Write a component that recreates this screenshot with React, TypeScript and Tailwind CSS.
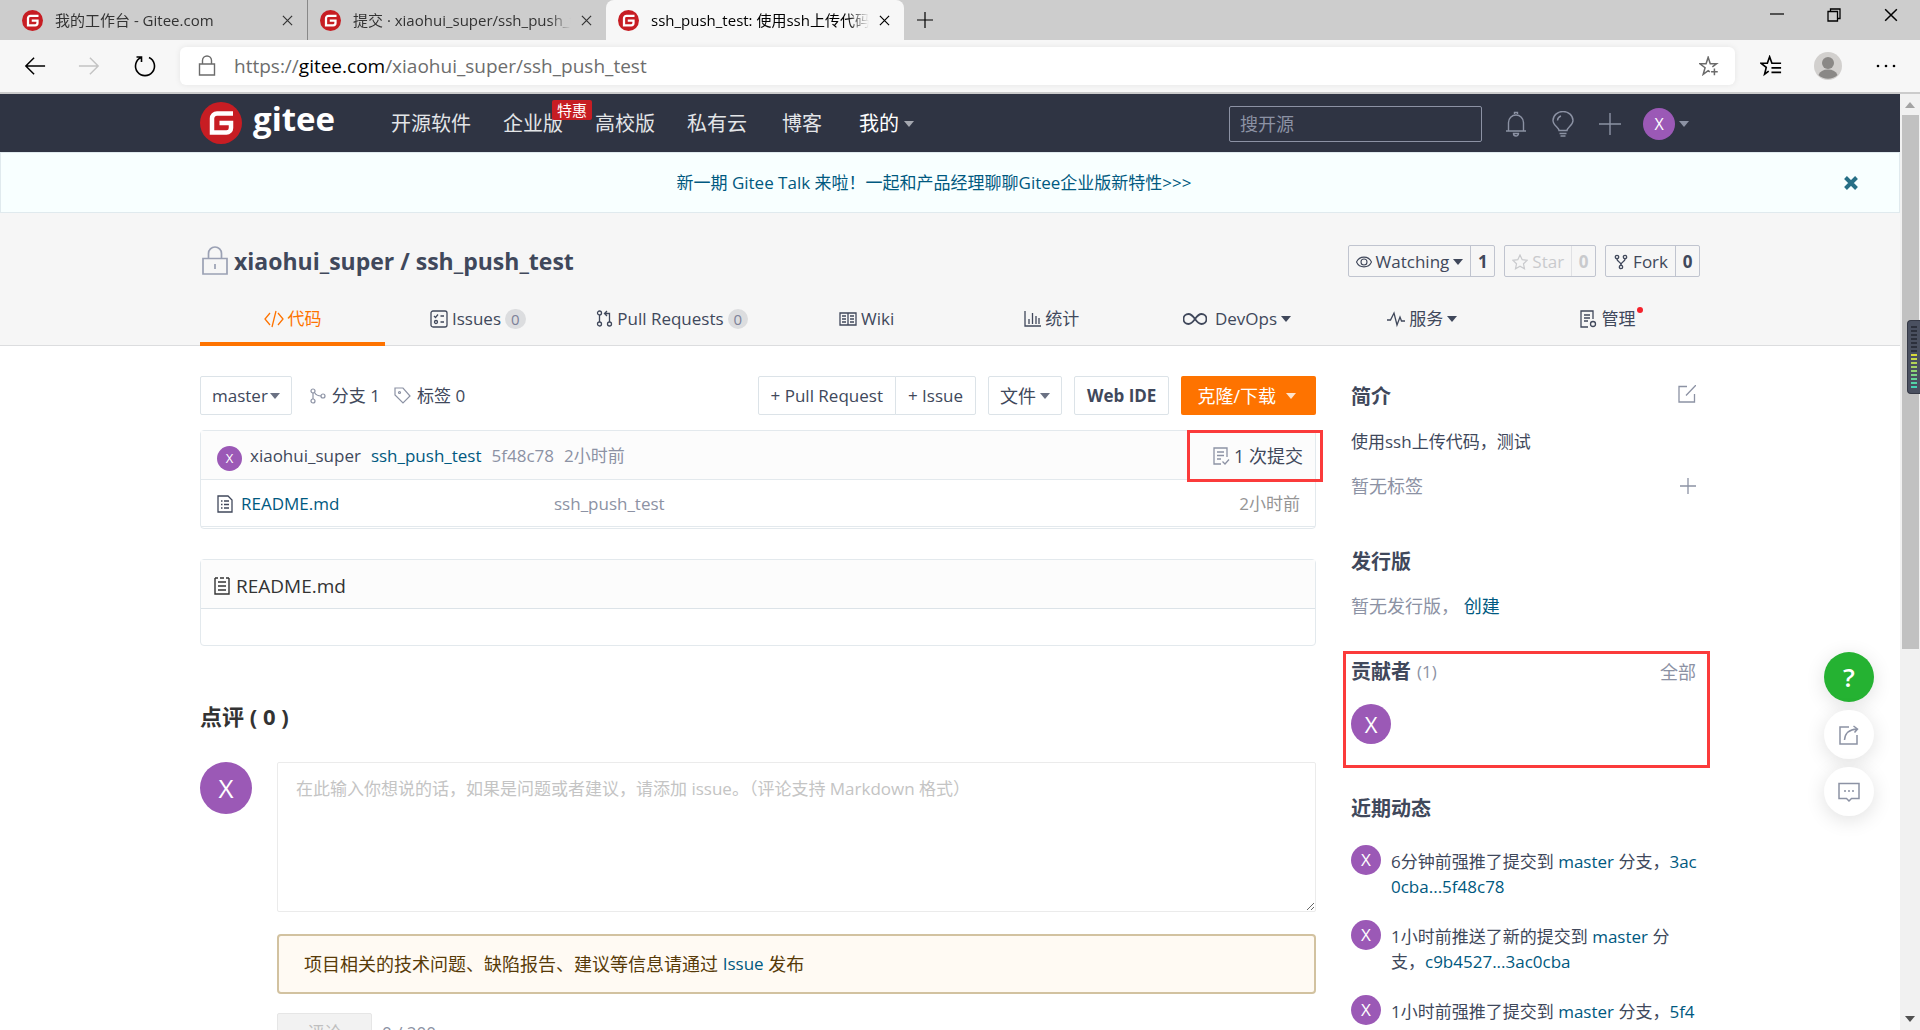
import type { ReactNode } from "react";

const browserTabs = [
  { title: "我的工作台 - Gitee.com", active: false },
  { title: "提交 · xiaohui_super/ssh_push_test", active: false },
  { title: "ssh_push_test: 使用ssh上传代码，测试", active: true },
];

const activities = [
  { text: "6分钟前强推了提交到", hash: "3ac0cba...5f48c78" },
  { text: "1小时前推送了新的提交到", hash: "c9b4527...3ac0cba" },
  { text: "1小时前强推了提交到", hash: "5f48c78...c9b4527" },
];

// Green to yellow meter drawn on the side widget
const meterBars = [
  "bg-[#2c303c]", "bg-[#2c303c]", "bg-[#2c303c]", "bg-[#2c303c]", "bg-[#2c303c]", "bg-[#2c303c]", "bg-[#2c303c]",
  "bg-[#d8d83a]", "bg-[#c8d84a]", "bg-[#b4d456]", "bg-[#a4d466]", "bg-[#90d474]", "bg-[#7cd486]",
  "bg-[#66d498]", "bg-[#54d4a6]", "bg-[#46d4b4]",
];

function Icon({ className = "", box = 24, width = 1.5, children }: { className?: string; box?: number; width?: number; children: ReactNode }) {
  return (
    <svg className={`shrink-0 ${className}`} viewBox={`0 0 ${box} ${box}`} fill="none" stroke="currentColor" strokeWidth={width} aria-hidden="true">
      {children}
    </svg>
  );
}

function GiteeMark({ className }: { className: string }) {
  return (
    <svg className={`shrink-0 ${className}`} viewBox="0 0 42 42" aria-hidden="true">
      <circle cx="21" cy="21" r="21" fill="#c71d23" />
      <path d="M33 11.5H17a5 5 0 0 0-5 5V30.500h14.500a4.500 4.500 0 0 0 4.500-4.500v-5H19.500" fill="none" stroke="#fff" strokeWidth="4.500" />
    </svg>
  );
}

function Caret({ className = "" }: { className?: string }) {
  return (
    <svg className={`h-[6px] w-[10px] shrink-0 ${className}`} viewBox="0 0 10 6" fill="currentColor" aria-hidden="true">
      <path d="M0 0h10L5 6z" />
    </svg>
  );
}

function Cross({ className }: { className: string }) {
  return (
    <Icon className={className} box={12} width={1.3}>
      <path d="M1 1l10 10M11 1L1 11" />
    </Icon>
  );
}

function Avatar({ className }: { className: string }) {
  return (
    <span className={`flex shrink-0 items-center justify-center rounded-full bg-[#9b59b6] text-white ${className}`}>X</span>
  );
}

function BrowserChrome() {
  return (
    <header className="shrink-0 bg-[#f7f7f7]">
      <div className="flex h-10 items-stretch bg-[#cdcdcd] pl-[10px] text-[15px]">
        {browserTabs.map((tab, i) => (
          <div
            key={tab.title}
            className={`flex w-[298px] items-center pl-3 pr-[10px] ${tab.active ? "rounded-t-lg bg-[#f7f7f7] text-black" : "text-[#333]"} ${i === 0 ? "border-r border-[#888]" : ""}`}
          >
            <GiteeMark className="h-[21px] w-[21px]" />
            <span className="ml-3 mr-[6px] flex-1 overflow-hidden whitespace-nowrap [mask-image:linear-gradient(to_right,black_90%,transparent)]">{tab.title}</span>
            <button type="button" aria-label="关闭标签页" className="p-1">
              <Cross className="h-[11px] w-[11px]" />
            </button>
          </div>
        ))}
        <button type="button" aria-label="新建标签页" className="px-[13px]">
          <Icon className="h-4 w-4" box={16} width={1.2}>
            <path d="M8 0v16M0 8h16" />
          </Icon>
        </button>
        <div className="ml-auto flex items-start gap-[43px] pr-[22px] pt-2 text-black">
          <button type="button" aria-label="最小化">
            <Icon className="h-[14px] w-[14px]" box={14} width={1.2}><path d="M0 6h14" /></Icon>
          </button>
          <button type="button" aria-label="还原">
            <Icon className="h-[14px] w-[14px]" box={14} width={1.3}><path d="M1 3.500h9.500V13H1zM3.500 3.500V1H13v9.500h-2.500" /></Icon>
          </button>
          <button type="button" aria-label="关闭">
            <Cross className="h-[14px] w-[14px]" />
          </button>
        </div>
      </div>
      <div className="flex h-[52px] items-center pl-6 pr-6">
        <button type="button" aria-label="后退" className="text-black">
          <Icon className="h-[22px] w-[22px]" width={1.600}><path d="M23 12H2M11 3l-9 9 9 9" /></Icon>
        </button>
        <button type="button" aria-label="前进" className="ml-8 text-[#c4c4c4]">
          <Icon className="h-[22px] w-[22px]" width={1.600}><path d="M1 12h21M13 3l9 9-9 9" /></Icon>
        </button>
        <button type="button" aria-label="刷新" className="ml-[33px] text-black">
          <Icon className="h-6 w-6" width={1.600}><path d="M8 3.500a9.500 9.500 0 1 0 8 0M3.500 3H8.500v5" /></Icon>
        </button>
        <div className="ml-[23px] flex h-[38px] flex-1 items-center rounded-md bg-white px-4 shadow-[0_0_6px_rgba(0,0,0,0.08)]">
          <Icon className="h-[22px] w-[22px] text-[#6b6b6b]" box={22} width={1.400}>
            <path d="M3.500 9h15v11h-15zM6.500 9V5.500a4.500 4.500 0 0 1 9 0V9" />
          </Icon>
          <span className="ml-4 flex-1 text-[19px] text-[#6d6d6d]">
            https://<span className="text-black">gitee.com</span>/xiaohui_super/ssh_push_test
          </span>
          <button type="button" aria-label="添加到收藏夹" className="text-[#6b6b6b]">
            <Icon className="h-5 w-5" width={1.800}>
              <path d="M13 19l-2-1.500L5 22l2.300-8L1 9.300h7.500L11 1.500l2.500 7.800H21L16 13M18.500 15v8M14.500 19h8" />
            </Icon>
          </button>
        </div>
        <button type="button" aria-label="收藏夹" className="ml-[25px] text-black">
          <Icon className="h-[22px] w-[22px]" width={1.800}>
            <path d="M9.500 17.500L5 21l1.800-7.500L1 9h7l2.500-7L13 9h10M12.500 14H23M12.500 19H23" />
          </Icon>
        </button>
        <svg className="ml-8 h-7 w-7" viewBox="0 0 28 28" aria-hidden="true">
          <circle cx="14" cy="14" r="14" fill="#d2d0ce" />
          <circle cx="14" cy="11" r="6" fill="#8a8886" />
          <path d="M4.500 23a10 8 0 0 1 19 0 14 14 0 0 1-19 0" fill="#8a8886" />
        </svg>
        <button type="button" aria-label="设置及其他" className="ml-[34px] text-black">
          <svg className="h-5 w-5" viewBox="0 0 20 20" fill="currentColor" aria-hidden="true">
            <circle cx="2" cy="10" r="1.300" /><circle cx="10" cy="10" r="1.300" /><circle cx="18" cy="10" r="1.300" />
          </svg>
        </button>
      </div>
      <div className="h-[2px] bg-[#cbcbcb]" />
    </header>
  );
}

function SiteNav() {
  return (
    <nav className="bg-[#2f3443] text-[#e3e5e8]">
      <div className="mx-auto flex h-[58px] max-w-[1500px] items-center pt-[2px] text-[20px]">
        <a href="#home" className="-mt-[2px] flex items-center gap-[11px] text-white">
          <GiteeMark className="h-[42px] w-[42px]" />
          <span className="-mt-2 text-[33px] font-bold leading-10">gitee</span>
        </a>
        <a href="#explore" className="ml-14">开源软件</a>
        <a href="#enterprise" className="relative ml-8">
          企业版
          <span className="absolute -top-3 left-[49px] whitespace-nowrap rounded-xs bg-[#c71d23] px-[5px] text-[15px] leading-5 text-white">特惠</span>
        </a>
        <a href="#education" className="ml-8">高校版</a>
        <a href="#private" className="ml-8">私有云</a>
        <a href="#blog" className="ml-[35px]">博客</a>
        <a href="#mine" className="ml-[37px] flex items-center gap-[5px] text-white">
          我的 <Caret className="text-[#a5a8b0]" />
        </a>
        <input
          type="text"
          aria-label="搜开源"
          placeholder="搜开源"
          className="ml-auto h-9 w-[253px] rounded-xs border border-[#8c92a4] bg-transparent px-[10px] text-[18px] text-white placeholder:text-[#8c92a4]"
        />
        <button type="button" aria-label="通知" className="ml-[21px] text-[#8c92a4]">
          <Icon className="h-[26px] w-[26px]" box={26} width={1.400}>
            <path d="M3 20h20M5.500 20v-8.500a7.500 7.500 0 0 1 15 0V20M11.500 3V1.500h3V3M10.500 22.500a2.500 2.500 0 0 0 5 0z" />
          </Icon>
        </button>
        <button type="button" aria-label="提示" className="ml-[21px] text-[#8c92a4]">
          <Icon className="h-[26px] w-[26px]" box={26} width={1.400}>
            <path d="M9 19.500c0-3-6-5-6-10a10 9 0 0 1 20 0c0 5-6 7-6 10zM9.500 22.500h7M10.500 25h5M7.500 9.500a5 5 0 0 1 3.500-4.500" />
          </Icon>
        </button>
        <button type="button" aria-label="新建" className="ml-[23px] text-[#8c92a4]">
          <Icon className="h-[22px] w-[22px]" box={22} width={1.400}><path d="M11 0v22M0 11h22" /></Icon>
        </button>
        <button type="button" aria-label="用户菜单" className="ml-[22px] mr-[11px] flex items-center gap-1 text-[#8c92a4]">
          <Avatar className="h-8 w-8 text-[16px]" />
          <Caret />
        </button>
      </div>
    </nav>
  );
}

function Announcement() {
  return (
    <div className="flex h-[61px] items-center border border-[#e0eaee] bg-[#f8ffff] pl-7 pr-9 text-[#005980]">
      <a href="#talk" className="flex-1 text-center">新一期 Gitee Talk 来啦！一起和产品经理聊聊Gitee企业版新特性&gt;&gt;&gt;</a>
      <button type="button" aria-label="关闭公告" className="flex w-6 justify-center">
        <Icon className="h-[14px] w-[14px] text-[#276f86]" box={14} width={4}><path d="M1.500 1.500l11 11M12.500 1.500l-11 11" /></Icon>
      </button>
    </div>
  );
}

function CountButton({ icon, label, count, caret, muted }: { icon: ReactNode; label: string; count: number; caret?: boolean; muted?: boolean }) {
  return (
    <div className={`flex h-8 items-stretch rounded-xs border border-[#c0c4cf] ${muted ? "text-[#c9cacd]" : "text-[#40485b]"}`}>
      <button type="button" disabled={muted} className="flex items-center gap-1 px-[7px] pt-[2px]">
        {icon}
        <span>{label}</span>
        {caret && <Caret />}
      </button>
      <a href="#count" className={`flex w-6 items-center justify-center border-l pt-[2px] font-bold ${muted ? "border-[#e0e1e4]" : "border-[#c0c4cf]"}`}>{count}</a>
    </div>
  );
}

function RepoTab({ icon, label, count, caret, wide, active, dot }: { icon: ReactNode; label: string; count?: number; caret?: boolean; wide?: boolean; active?: boolean; dot?: boolean }) {
  return (
    <a
      href="#tab"
      className={`-mb-px flex items-center justify-center gap-1 border-b-4 pt-[6px] ${wide ? "flex-[11]" : "flex-[10]"} ${active ? "border-[#fe7300] text-[#fe7300]" : "border-transparent"}`}
    >
      {icon}
      <span className="relative">
        {label}
        {dot && <span className="absolute -right-2 top-0 h-[6px] w-[6px] rounded-full bg-[#f5222d]" />}
      </span>
      {count !== undefined && <span className="rounded-full bg-[#dcdddf] px-[6px] text-[15px] leading-5 text-[#7c8299]">{count}</span>}
      {caret && <Caret />}
    </a>
  );
}

function RepoHeader() {
  return (
    <section className="border-b border-[#dcdddf] bg-[#f6f6f6] pt-8 text-[#40485b]">
      <div className="mx-auto max-w-[1500px]">
        <div className="flex items-center">
          <Icon className="h-[30px] w-[30px] text-[#9ba1b4]" box={30} width={1.700}>
            <path d="M3 12.500h24V28H3zM8.500 12.500V7.500a6.500 6.500 0 0 1 13 0v5M15 18v5" />
          </Icon>
          <h1 className="ml-1 text-[23px] font-bold leading-8">
            <a href="#owner">xiaohui_super</a> / <a href="#repo">ssh_push_test</a>
          </h1>
          <div className="ml-auto flex gap-[9px]">
            <CountButton
              label="Watching"
              count={1}
              caret
              icon={<Icon className="h-4 w-4" box={16} width={1.100}><path d="M.5 8c3-6.500 12-6.500 15 0-3 6.500-12 6.500-15 0z" /><circle cx="8" cy="8" r="3" /></Icon>}
            />
            <CountButton
              label="Star"
              count={0}
              muted
              icon={<Icon className="h-4 w-4" box={16} width={1.200}><path d="M8 1l2.200 4.700 5 .6-3.700 3.500 1 5L8 12.300l-4.500 2.500 1-5L.8 6.300l5-.6z" /></Icon>}
            />
            <CountButton
              label="Fork"
              count={0}
              icon={<Icon className="h-4 w-4" box={16} width={1.300}><circle cx="4" cy="3" r="1.700" /><circle cx="12" cy="3" r="1.700" /><circle cx="8" cy="13" r="1.700" /><path d="M4 5c0 3 4 2.500 4 6 0-3.500 4-3 4-6" /></Icon>}
            />
          </div>
        </div>
        <div className="mt-3 flex h-14 items-stretch">
          <RepoTab active label="代码" icon={<Icon className="h-5 w-5" box={20} width={1.300}><path d="M6 4L1 10l5 6M14 4l5 6-5 6M12 2L8 18" /></Icon>} />
          <RepoTab label="Issues" count={0} icon={<Icon className="h-[18px] w-[18px]" box={18} width={1.300}><rect x="1" y="1" width="16" height="16" rx="2" /><path d="M4 6l1.500 1.500L8 4.500M10.500 6H14M10.500 12H14" /><circle cx="6" cy="12" r="1.500" /></Icon>} />
          <RepoTab wide label="Pull Requests" count={0} icon={<Icon className="h-[17px] w-[17px]" box={17} width={1.300}><circle cx="3.500" cy="3" r="2" /><circle cx="3.500" cy="14" r="2" /><circle cx="13.500" cy="14" r="2" /><path d="M3.500 5v7M13.500 12V3.500H8.500M11 1L8.500 3.500 11 6" /></Icon>} />
          <RepoTab label="Wiki" icon={<Icon className="h-[18px] w-[18px]" box={18} width={1.300}><path d="M1 3h16v12H1zM9 3v12M3 6h4M3 9h4M3 12h4M11 6h4M11 9h4M11 12h4" /></Icon>} />
          <RepoTab label="统计" icon={<Icon className="h-[17px] w-[17px]" box={17} width={1.300}><path d="M1 1v15h16M5 14V9M8.500 14V3M12 14V6M15 14V8" /></Icon>} />
          <RepoTab label="DevOps" caret icon={<Icon className="mr-1 h-6 w-6" width={1.800}><path d="M12 12c-2.500-3.500-4-5-6.500-5a5 5 0 0 0 0 10c2.500 0 4-1.500 6.500-5s4-5 6.500-5a5 5 0 0 1 0 10c-2.500 0-4-1.500-6.500-5z" /></Icon>} />
          <RepoTab label="服务" caret icon={<Icon className="h-[18px] w-[18px]" box={18} width={1.300}><path d="M0 10h3.500L7 3l3 12 3-8 1.500 4H18" /></Icon>} />
          <RepoTab label="管理" dot icon={<Icon className="h-[18px] w-[18px]" box={18} width={1.300}><path d="M9 17H2V1h12v8M5 5h6M5 8h6M5 11h4" /><circle cx="14" cy="14" r="2.500" /></Icon>} />
        </div>
      </div>
    </section>
  );
}

function Toolbar() {
  const button = "flex h-[39px] items-center border border-[#dce3e8] bg-white";
  return (
    <div className="flex items-center text-[#40485b]">
      <button type="button" className={`${button} gap-[2px] rounded-xs px-[11px]`}>
        master <Caret className="text-[#6a7183]" />
      </button>
      <a href="#branches" className="ml-[18px] flex items-center gap-[6px]">
        <Icon className="h-4 w-4 text-[#8c92a4]" box={16} width={1.200}><circle cx="3" cy="3" r="2" /><circle cx="3" cy="13" r="2" /><circle cx="13" cy="8" r="2" /><path d="M3 5v6M4.500 4.500C6 7 8 8 11 8" /></Icon>
        分支 1
      </a>
      <a href="#tags" className="ml-[14px] flex items-center gap-[6px]">
        <Icon className="h-[17px] w-[17px] text-[#8c92a4]" box={17} width={1.200}><path d="M1 1h8l7 8-7 7-8-8z" /><circle cx="5.500" cy="5.500" r="1" /></Icon>
        标签 0
      </a>
      <div className="ml-auto flex">
        <button type="button" className={`${button} rounded-l-xs px-3`}>+ Pull Request</button>
        <button type="button" className={`${button} -ml-px rounded-r-xs px-3`}>+ Issue</button>
      </div>
      <button type="button" className={`${button} ml-3 gap-1 rounded-xs px-[11px] text-[18px]`}>
        文件 <Caret className="text-[#6a7183]" />
      </button>
      <button type="button" className={`${button} ml-3 rounded-xs px-3 font-bold`}>Web IDE</button>
      <button type="button" className="ml-3 flex h-[39px] items-center gap-[10px] rounded-xs bg-[#fe7300] pl-4 pr-5 text-[18px] text-white">
        克隆/下载 <Caret className="text-[#ffe3cc]" />
      </button>
    </div>
  );
}

function FileTable() {
  return (
    <div className="mt-[15px] rounded-sm border border-[#e3e9ed] pb-px">
      <div className="flex h-12 items-center bg-[#fcfcfc] pl-4 pr-3 pt-[2px]">
        <Avatar className="mt-1 h-[25px] w-[25px] text-[13px]" />
        <a href="#owner" className="ml-2 text-[#40485b]">xiaohui_super</a>
        <a href="#commit" className="ml-[10px] text-[#005980]">ssh_push_test</a>
        <a href="#commit" className="ml-[10px] text-[#8c92a4]">5f48c78</a>
        <span className="ml-[10px] text-[#8c92a4]">2小时前</span>
        <a href="#commits" className="relative ml-auto flex items-center gap-1 text-[18px] text-[#40485b]">
          <Icon className="h-[18px] w-[18px] text-[#8c92a4]" box={18} width={1.300}><path d="M15 10V1H2v16h7M5 5h7M5 8.500h7M5 12h4M10.500 14.500l2.500 2.500 4-4.500" /></Icon>
          1 次提交
          <span className="pointer-events-none absolute -inset-y-[14px] -left-[25px] -right-5 border-[3px] border-[#fb3b3b]" />
        </a>
      </div>
      <table className="w-full table-fixed">
        <tbody>
          <tr className="h-[47px] border-y border-[#e3e9ed]">
            <td className="w-[353px] pl-[15px] pt-[2px]">
              <a href="#readme" className="flex items-center gap-[7px] text-[#005980]">
                <Icon className="h-[18px] w-[18px] text-[#40485b]" box={18} width={1.300}><path d="M2 1h10l4 4v12H2zM5 6h1.500M5 9.500h1.500M5 13h1.500M8 6h5M8 9.500h5M8 13h5" /></Icon>
                README.md
              </a>
            </td>
            <td className="pt-[2px] text-[#8c92a4]">
              <a href="#commit">ssh_push_test</a>
            </td>
            <td className="w-40 pr-[15px] pt-[2px] text-right text-[#959595]">2小时前</td>
          </tr>
        </tbody>
      </table>
    </div>
  );
}

function Comments() {
  return (
    <section>
      <h2 className="mt-[54px] text-[22px] font-bold leading-8 text-[#333]">点评 ( 0 )</h2>
      <form className="mt-[30px] flex gap-[25px]">
        <Avatar className="h-[52px] w-[52px] text-[26px]" />
        <div className="flex-1">
          <textarea
            aria-label="评论内容"
            placeholder="在此输入你想说的话，如果是问题或者建议，请添加 issue。（评论支持 Markdown 格式）"
            className="block h-[150px] w-full rounded-xs border border-[#ebebeb] px-[18px] py-3 text-[17px] leading-7 placeholder:text-[#c4c4c4]"
          />
          <p className="mt-[22px] flex h-[60px] items-center whitespace-pre rounded-sm border-2 border-[#d2c2a0] bg-[#fffaf3] px-[25px] text-[18px] text-[#573a08]">
            项目相关的技术问题、缺陷报告、建议等信息请通过 <a href="#issue" className="text-[17px] text-[#005980]">Issue</a> 发布
          </p>
          <div className="mt-[19px] flex items-center gap-[10px]">
            <button type="button" disabled className="h-[39px] w-[95px] rounded-xs border border-[#e6e6e6] bg-[#f2f2f2] text-[#bfbfbf]">评论</button>
            <span className="text-[#8c92a4]">0 / 200</span>
          </div>
        </div>
      </form>
    </section>
  );
}

function Sidebar() {
  return (
    <aside className="w-[349px] shrink-0 pt-[9px] text-[18px] leading-[26px] text-[#40485b]">
      <div className="flex items-start justify-between pr-1">
        <h2 className="text-[20px] font-bold leading-6">简介</h2>
        <button type="button" aria-label="编辑简介" className="text-[#8c92a4]">
          <Icon className="h-[18px] w-[18px]" box={18} width={1.300}><path d="M9 1.500H1V17h15.500V9M18 0L8 10.500" /></Icon>
        </button>
      </div>
      <p className="mt-5 text-[17px]">使用ssh上传代码，测试</p>
      <div className="mt-[18px] flex items-center justify-between pr-1 text-[#8c92a4]">
        <span>暂无标签</span>
        <button type="button" aria-label="添加标签">
          <Icon className="h-4 w-4" box={16} width={1.300}><path d="M8 0v16M0 8h16" /></Icon>
        </button>
      </div>
      <h2 className="mt-[51px] text-[20px] font-bold leading-6">发行版</h2>
      <p className="mt-[19px] text-[#8c92a4]">
        暂无发行版， <a href="#release" className="text-[#005980]">创建</a>
      </p>
      <div className="relative mt-10">
        <div className="flex items-center pr-1">
          <h2 className="text-[20px] font-bold leading-6">贡献者</h2>
          <span className="ml-[6px] text-[17px] text-[#8c92a4]">(1)</span>
          <a href="#contributors" className="ml-auto text-[#8c92a4]">全部</a>
        </div>
        <Avatar className="mt-[19px] h-10 w-10 text-[22px]" />
        <span className="pointer-events-none absolute -bottom-6 -left-2 -right-[10px] -top-2 border-[3px] border-[#fb3b3b]" />
      </div>
      <h2 className="mt-[53px] text-[20px] font-bold leading-6">近期动态</h2>
      <ul className="mt-6">
        {activities.map((item) => (
          <li key={item.hash} className="flex h-[75px] gap-[10px]">
            <Avatar className="h-[30px] w-[30px] text-[17px]" />
            <p className="flex-1 break-all pt-1 text-[17px] leading-[25px]">
              {item.text} <a href="#branch" className="text-[#005980]">master</a> 分支，
              <a href="#diff" className="text-[#005980]">{item.hash}</a>
            </p>
          </li>
        ))}
      </ul>
    </aside>
  );
}

function FloatingButtons() {
  const circle = "flex items-center justify-center rounded-full shadow-[0_4px_20px_rgba(0,0,0,0.12)]";
  return (
    <div className="absolute right-[26px] top-[558px] flex flex-col gap-2">
      <button type="button" aria-label="帮助" className={`${circle} h-[50px] w-[50px] bg-[#25b232] text-[26px] font-semibold text-white`}>?</button>
      <button type="button" aria-label="分享" className={`${circle} h-[49px] w-[50px] bg-white text-[#8c92a4]`}>
        <Icon className="h-5 w-5" box={20} width={1.500}><path d="M10 2H1v17h17v-9M5.500 15C6 8 9.500 4.500 18 4M14.500 1L18.500 4l-3 3.500" /></Icon>
      </button>
      <button type="button" aria-label="反馈" className={`${circle} h-[49px] w-[50px] bg-white text-[#8c92a4]`}>
        <Icon className="h-[22px] w-[22px]" box={22} width={1.500}><path d="M1 2.500h20v15h-7.500L11 20l-2.500-2.500H1zM6 10h2M10 10h2M14 10h2" /></Icon>
      </button>
    </div>
  );
}

function ScrollTrack() {
  return (
    <div className="relative flex w-5 shrink-0 flex-col items-center bg-[#f1f1f1] py-2 text-[#505050]">
      <Caret className="rotate-180 text-[#a3a3a3]" />
      <div className="mt-[7px] h-[58%] w-[17px] bg-[#c1c1c1]" />
      <Caret className="mt-auto" />
      <div className="absolute right-0 top-[226px] flex h-[74px] w-[13px] flex-col items-center justify-center gap-[2px] rounded-l-sm border border-r-0 border-[#343845] bg-[#4a5060]">
        {meterBars.map((bar, i) => (
          <span key={i} className={`h-[2px] w-[6px] ${bar}`} />
        ))}
      </div>
    </div>
  );
}

export default function App() {
  return (
    <div className="flex h-screen flex-col overflow-hidden bg-white font-['Open_Sans','Noto_Sans_CJK_SC',sans-serif] text-[17px] leading-6">
      <BrowserChrome />
      <div className="relative flex min-h-0 flex-1">
        <div className="relative min-w-0 flex-1 overflow-hidden">
          <SiteNav />
          <Announcement />
          <RepoHeader />
          <main className="mx-auto flex max-w-[1500px] gap-[35px] pt-[30px]">
            <div className="min-w-0 flex-1">
              <Toolbar />
              <FileTable />
              <article className="mt-[30px] rounded-sm border border-[#e3e9ed]">
                <h3 className="flex h-[49px] items-center gap-[5px] border-b border-[#dce3e8] bg-[#fcfcfc] px-3 pt-1 text-[19px] text-[#333]">
                  <Icon className="h-[18px] w-[18px]" box={18} width={1.400}><path d="M2 1v16h14V1M2 1h3M7 1h4M13 1h3M5 5h8M5 9h8M5 13h8" /></Icon>
                  README.md
                </h3>
                <div className="h-9" />
              </article>
              <Comments />
            </div>
            <Sidebar />
          </main>
          <FloatingButtons />
        </div>
        <ScrollTrack />
      </div>
    </div>
  );
}
